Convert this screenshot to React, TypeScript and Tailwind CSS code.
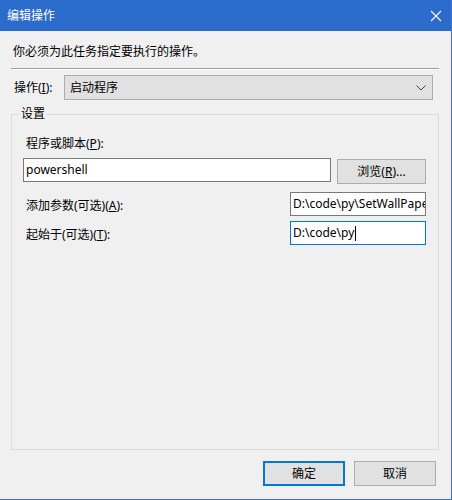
import { FC, ReactNode } from "react";

const font = {
  fontFamily: '"Noto Sans", "Noto Sans CJK SC", sans-serif',
};

const Field: FC<{ value: string; focused?: boolean; width: string; caret?: boolean }> = ({
  value,
  focused,
  width,
  caret,
}) => (
  <div
    className={`${width} h-[24px] bg-white border flex items-center pl-[2px] overflow-hidden whitespace-nowrap text-[12px] text-black ${
      focused ? "border-[#0078d7]" : "border-[#7a7a7a]"
    }`}
  >
    <span>{value}</span>
    {caret && <span className="w-px h-[15px] bg-black ml-px" />}
  </div>
);

const Label: FC<{ children: ReactNode; className?: string }> = ({ children, className }) => (
  <span className={`text-[12px] leading-[16px] text-black ${className ?? ""}`}>{children}</span>
);

const Btn: FC<{ children: ReactNode; primary?: boolean }> = ({ children, primary }) => (
  <div
    className={`w-[82px] h-[25px] bg-[#e1e1e1] flex items-center justify-center text-[12px] text-black ${
      primary ? "border-2 border-[#0078d7]" : "border border-[#adadad]"
    }`}
  >
    {children}
  </div>
);

export default function App() {
  return (
    <div
      style={font}
      className="w-[452px] h-[500px] bg-[#f0f0f0] border-r border-b border-[#3b74c8] flex flex-col"
    >
      {/* title bar */}
      <div className="h-[31px] bg-[#2b6bcc] flex items-center justify-between pl-[7px] pr-[9px] text-white text-[12px]">
        <span>编辑操作</span>
        <svg width="12" height="12" viewBox="0 0 12 12" stroke="white" strokeWidth="1.1">
          <path d="M1 1L11 11M11 1L1 11" />
        </svg>
      </div>

      <div className="flex flex-col pl-[11px] pr-[12px]">
        <Label className="pt-[13px] pl-[2px]">你必须为此任务指定要执行的操作。</Label>

        <div className="mt-[8px] h-px bg-[#a0a0a0]" />
        <div className="h-px bg-white" />

        <div className="mt-[5px] flex items-center pl-[3px] pr-[6px]">
          <Label className="w-[50px]">
            操作(<u>I</u>):
          </Label>
          <div className="flex-1 h-[25px] bg-[#e1e1e1] border border-[#adadad] flex items-center justify-between pl-[5px] pr-[6px]">
            <span className="text-[12px] text-black">启动程序</span>
            <svg width="10" height="6" viewBox="0 0 10 6" fill="none" stroke="#444" strokeWidth="1">
              <path d="M0.5 0.5L5 5L9.5 0.5" />
            </svg>
          </div>
        </div>

        {/* settings group */}
        <div className="relative mt-[14px] h-[336px] border border-[#dcdcdc] flex flex-col pl-[11px] pr-[11px] pt-[21px]">
          <span className="absolute -top-[9px] left-[7px] px-[2px] bg-[#f0f0f0] text-[12px] leading-[16px] text-black">
            设置
          </span>
          <Label className="pl-[3px]">
            程序或脚本(<u>P</u>):
          </Label>
          <div className="mt-[6px] flex items-start">
            <Field value="powershell" width="w-[308px]" />
            <div className="ml-[6px] mt-px w-[89px] h-[25px] bg-[#e1e1e1] border border-[#adadad] flex items-center justify-center text-[12px] text-black">
              浏览(<u>R</u>)...
            </div>
          </div>

          <div className="mt-[8px] flex items-center justify-between pr-[1px]">
            <Label className="pl-[3px] mt-[4px]">
              添加参数(可选)(<u>A</u>):
            </Label>
            <Field value={"D:\\code\\py\\SetWallPaper.py"} width="w-[136px]" />
          </div>
          <div className="mt-[5px] flex items-center justify-between pr-[1px]">
            <Label className="pl-[3px] mt-[3px]">
              起始于(可选)(<u>T</u>):
            </Label>
            <Field value={"D:\\code\\py"} width="w-[136px]" focused caret />
          </div>
        </div>

        <div className="mt-[11px] flex justify-end gap-[9px] pr-[3px]">
          <Btn primary>确定</Btn>
          <Btn>取消</Btn>
        </div>
      </div>
    </div>
  );
}
